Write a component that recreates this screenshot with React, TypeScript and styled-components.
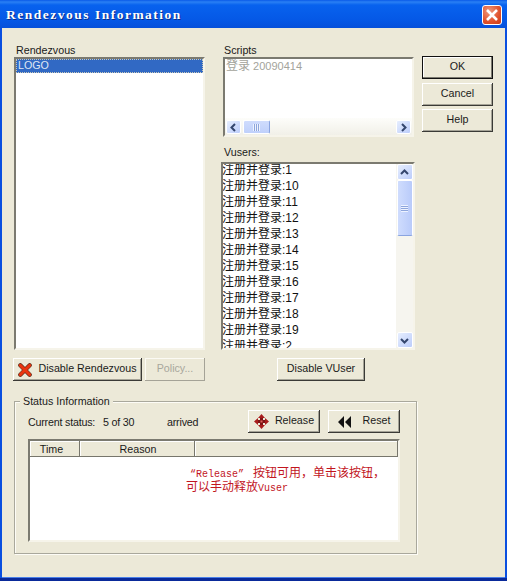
import { ReactNode } from 'react';
import styled, { createGlobalStyle } from 'styled-components';

const GlobalStyle = createGlobalStyle`
  html, body {
    margin: 0;
    padding: 0;
    background: #fff;
  }
  * {
    box-sizing: border-box;
  }
`;

const FACE = '#ece9d8';
const SANS = `"Liberation Sans", "Noto Sans CJK SC", sans-serif`;
const VUSERS = ['1', '10', '11', '12', '13', '14', '15', '16', '17', '18', '19', '2'];

const Window = styled.div`
  width: 507px;
  height: 581px;
  display: flex;
  flex-direction: column;
  overflow: hidden;
  background: #0a4fe0;
  font-family: ${SANS};
  font-size: 10.7px;
  color: #1a1a1a;
`;

const TitleBar = styled.div`
  height: 28px;
  flex: none;
  display: flex;
  align-items: center;
  justify-content: space-between;
  padding: 2px 5px 0 6px;
  background: linear-gradient(#0a5ae8 0, #2a80f4 2px, #0862ee 5px, #0558e6 20px, #0650da 28px);
`;

const TitleText = styled.span`
  font-family: "Liberation Serif", serif;
  font-weight: 700;
  font-size: 13.5px;
  letter-spacing: 1.5px;
  color: #fff;
  text-shadow: 1px 1px #0a2f8c;
`;

const CloseButton = styled.div`
  width: 20px;
  height: 20px;
  display: flex;
  align-items: center;
  justify-content: center;
  border: 1px solid #fff;
  border-radius: 3px;
  background: radial-gradient(circle at 35% 30%, #ee9a7e, #e0512c 60%, #c83a18);
`;

const Body = styled.div`
  flex: 1;
  margin: 0 2px;
  display: flex;
  flex-direction: column;
  padding: 16px 0 0 11px;
  background: ${FACE};
  border-bottom: 1px solid #4a80e8;
`;

const BottomEdge = styled.div`
  height: 3px;
  flex: none;
  background: #0a2a9a;
`;

const TopRow = styled.div`
  display: flex;
  height: 337px;
`;

const LeftColumn = styled.div`
  width: 192px;
  display: flex;
  flex-direction: column;
`;

const MiddleColumn = styled.div`
  width: 193px;
  margin-left: 17px;
  display: flex;
  flex-direction: column;
`;

const RightColumn = styled.div`
  width: 71px;
  margin-left: 7px;
  padding-top: 12px;
  display: flex;
  flex-direction: column;
`;

const FieldLabel = styled.div<{ $indent: number }>`
  height: 13px;
  line-height: 13px;
  padding-left: ${(p) => p.$indent}px;
`;

const Sunken = styled.div<{ $height: number; $inset: number; $width: number }>`
  position: relative;
  width: ${(p) => p.$width}px;
  height: ${(p) => p.$height}px;
  margin-left: ${(p) => p.$inset}px;
  border: 2px solid;
  border-color: #7b7a70 #f6f4ea #f6f4ea #7b7a70;
  background: #fff;
  overflow: hidden;
`;

const SelectedRow = styled.div`
  height: 14px;
  line-height: 13px;
  padding-left: 2px;
  background: #3169c4;
  outline: 1px dotted #c8c8b8;
  outline-offset: -1px;
  color: #dfe6f4;
`;

const ScriptRow = styled.div`
  height: 15px;
  line-height: 15px;
  padding-left: 1px;
  font-size: 11px;
  color: #a3a39b;
`;

const CjkPart = styled.span`
  font-size: 12px;
`;

const HorizontalBar = styled.div`
  height: 17px;
  margin-top: 44px;
  padding: 2px 1px 1px;
  display: flex;
  justify-content: space-between;
  background: linear-gradient(#fdfdfa, #f1f0e8);
`;

const ScrollArrow = styled.div`
  width: 16px;
  height: 16px;
  flex: none;
  display: flex;
  align-items: center;
  justify-content: center;
  border: 1px solid #fff;
  border-radius: 2px;
  background: linear-gradient(135deg, #e6eefe, #bccdfb);
`;

const WideArrow = styled(ScrollArrow)`
  width: 15px;
  height: 14px;
`;

const HorizontalThumb = styled.div`
  width: 27px;
  height: 14px;
  margin: 0 auto 0 2px;
  display: flex;
  align-items: center;
  justify-content: center;
  border: 1px solid #fff;
  border-right-color: #8aa4e0;
  border-radius: 2px;
  background: linear-gradient(#cfdcfd, #bfd0fb);
`;

const GripLines = styled.div<{ $vertical?: boolean }>`
  width: 7px;
  height: 7px;
  background: repeating-linear-gradient(
    ${(p) => (p.$vertical ? '180deg' : '90deg')},
    #eef3ff 0 1px,
    #8ea6dc 1px 2px
  );
`;

const VuserPane = styled.div`
  display: flex;
  height: 100%;
`;

const VuserList = styled.div`
  flex: 1;
  overflow: hidden;
  margin: -2px 0 0 -1px;
`;

const VuserRow = styled.div`
  height: 16px;
  line-height: 16px;
  font-size: 12px;
  white-space: nowrap;
  color: #111;
`;

const VerticalBar = styled.div`
  width: 17px;
  flex: none;
  display: flex;
  flex-direction: column;
  align-items: center;
  background: #f6f5ef;
`;

const VerticalThumb = styled.div`
  width: 16px;
  height: 56px;
  display: flex;
  align-items: center;
  justify-content: center;
  border: 1px solid #fff;
  border-bottom-color: #8aa4e0;
  border-radius: 2px;
  background: linear-gradient(90deg, #cfdcfd, #b9cbfa);
`;

const Spacer = styled.div`
  flex: 1;
`;

const Button = styled.div<{ $width: number; $gap?: number; $disabled?: boolean }>`
  width: ${(p) => p.$width}px;
  height: 23px;
  flex: none;
  display: flex;
  align-items: center;
  justify-content: center;
  gap: ${(p) => p.$gap ?? 0}px;
  background: ${FACE};
  color: ${(p) => (p.$disabled ? '#a8a79c' : '#1a1a1a')};
  box-shadow: ${(p) =>
    p.$disabled
      ? 'inset -1px -1px #a5a397, inset 1px 1px #fbfaf4'
      : 'inset -1px -1px #3a3a36, inset 1px 1px #fff, inset -2px -2px #a5a397'};
`;

const DefaultButton = styled(Button)`
  border: 1px solid #111;
  box-shadow: inset -1px -1px #7b7a70, inset 1px 1px #fff;
`;

const ButtonLabel = styled.span`
  padding-bottom: 3px;
`;

const LeftActions = styled.div`
  display: flex;
  gap: 3px;
  margin-top: 8px;
`;

const MiddleAction = styled.div`
  display: flex;
  margin-top: 8px;
  padding-left: 55px;
`;

const DialogGap = styled.div<{ $size: number }>`
  height: ${(p) => p.$size}px;
  flex: none;
`;

const StatusGroup = styled.div`
  position: relative;
  width: 403px;
  height: 153px;
  margin: 20px 0 0 1px;
  padding: 8px 0 0 13px;
  border: 1px solid #a9a89c;
  box-shadow: 1px 1px #fdfcf6, inset 1px 1px #fdfcf6;
`;

const GroupLegend = styled.span`
  position: absolute;
  top: -7px;
  left: 5px;
  padding: 0 3px;
  line-height: 13px;
  background: ${FACE};
`;

const StatusRow = styled.div`
  width: 372px;
  display: flex;
  align-items: center;
`;

const StatusItem = styled.span<{ $width: number }>`
  width: ${(p) => p.$width}px;
  flex: none;
  letter-spacing: -0.2px;
`;

const ReleaseActions = styled.div`
  margin-left: auto;
  display: flex;
  gap: 8px;
`;

const Table = styled.div`
  position: relative;
  width: 372px;
  height: 103px;
  margin-top: 6px;
  border: 2px solid;
  border-color: #7b7a70 #f6f4ea #f6f4ea #7b7a70;
  background: #fff;
  display: flex;
  flex-direction: column;
`;

const TableHead = styled.div`
  height: 16px;
  display: flex;
  flex: none;
  background: ${FACE};
  border-bottom: 1px solid #77766c;
`;

const HeadCell = styled.div<{ $width?: number; $shift?: number }>`
  width: ${(p) => (p.$width ? `${p.$width}px` : 'auto')};
  flex: ${(p) => (p.$width ? 'none' : 1)};
  padding: 0 ${(p) => (p.$shift && p.$shift < 0 ? -p.$shift : 0)}px 0 ${(p) => (p.$shift && p.$shift > 0 ? p.$shift : 0)}px;
  line-height: 16px;
  text-align: center;
  border-right: 1px solid #77766c;
  box-shadow: inset 1px 1px #fff;
`;

const Annotation = styled.div`
  position: absolute;
  top: 26px;
  left: 156px;
  font-size: 12px;
  line-height: 12px;
  color: #c2161e;
  white-space: nowrap;
`;

const AnnotationLine = styled.div<{ $indent: number }>`
  padding-left: ${(p) => p.$indent}px;
`;

const Latin = styled.span`
  font-family: "Liberation Mono", monospace;
  font-size: 10px;
`;

const QuotedLatin = styled(Latin)`
  padding-right: 3px;
`;

function Chevron({ dir }: { dir: 'left' | 'right' | 'up' | 'down' }) {
  const rotate = { right: 0, down: 90, left: 180, up: 270 }[dir];
  return (
    <svg width="9" height="9" viewBox="0 0 9 9" style={{ transform: `rotate(${rotate}deg)` }}>
      <path d="M3 1 L6.5 4.5 L3 8" fill="none" stroke="#34466e" strokeWidth="2" />
    </svg>
  );
}

function CloseGlyph() {
  return (
    <svg width="14" height="14" viewBox="0 0 14 14">
      <path d="M2 2 L12 12 M12 2 L2 12" stroke="#fff" strokeWidth="2.6" />
    </svg>
  );
}

function DisableIcon() {
  return (
    <svg width="14" height="14" viewBox="0 0 15 15">
      <path d="M2.5 2.5 L12.5 12.5 M12.5 2.5 L2.5 12.5" stroke="#5a2a18" strokeWidth="4.6" strokeLinecap="round" />
      <path d="M2.5 2.5 L12.5 12.5 M12.5 2.5 L2.5 12.5" stroke="#ea3510" strokeWidth="3.2" strokeLinecap="round" />
    </svg>
  );
}

function ReleaseIcon() {
  return (
    <svg width="15" height="15" viewBox="0 0 15 15">
      <path d="M7.5 0 L11 4 H4 Z M7.5 15 L11 11 H4 Z M0 7.5 L4 4 V11 Z M15 7.5 L11 4 V11 Z" fill="#a81c1c" />
      <path d="M6 4 H9 V6 H11 V9 H9 V11 H6 V9 H4 V6 H6 Z" fill="#7c1414" />
      <path d="M6.5 6.5 H8.5 V8.5 H6.5 Z" fill="#e0605a" />
    </svg>
  );
}

function ResetIcon() {
  return (
    <svg width="13" height="12" viewBox="0 0 13 12">
      <path d="M6 0 L6 12 L0 6 Z M13 0 L13 12 L7 6 Z" fill="#111" />
    </svg>
  );
}

function IconButton({ icon, label, gap, width }: { icon: ReactNode; label: string; gap: number; width: number }) {
  return (
    <Button $width={width} $gap={gap}>
      {icon}
      <ButtonLabel>{label}</ButtonLabel>
    </Button>
  );
}

export default function App() {
  return (
    <>
      <GlobalStyle />
      <Window>
        <TitleBar>
          <TitleText>Rendezvous Information</TitleText>
          <CloseButton>
            <CloseGlyph />
          </CloseButton>
        </TitleBar>
        <Body>
          <TopRow>
            <LeftColumn>
              <FieldLabel $indent={3}>Rendezvous</FieldLabel>
              <Sunken $width={191} $height={293} $inset={1}>
                <SelectedRow>LOGO</SelectedRow>
              </Sunken>
              <LeftActions>
                <IconButton icon={<DisableIcon />} label="Disable Rendezvous" gap={6} width={129} />
                <Button $width={60} $disabled><ButtonLabel>Policy...</ButtonLabel></Button>
              </LeftActions>
            </LeftColumn>
            <MiddleColumn>
              <FieldLabel $indent={2}>Scripts</FieldLabel>
              <Sunken $width={191} $height={80} $inset={1}>
                <ScriptRow>
                  <CjkPart>登录</CjkPart> 20090414
                </ScriptRow>
                <HorizontalBar>
                  <WideArrow><Chevron dir="left" /></WideArrow>
                  <HorizontalThumb><GripLines /></HorizontalThumb>
                  <WideArrow><Chevron dir="right" /></WideArrow>
                </HorizontalBar>
              </Sunken>
              <DialogGap $size={9} />
              <FieldLabel $indent={2}>Vusers:</FieldLabel>
              <DialogGap $size={3} />
              <Sunken $width={194} $height={188} $inset={-1}>
                <VuserPane>
                  <VuserList>
                    {VUSERS.map((id) => (
                      <VuserRow key={id}>注册并登录:{id}</VuserRow>
                    ))}
                  </VuserList>
                  <VerticalBar>
                    <ScrollArrow><Chevron dir="up" /></ScrollArrow>
                    <VerticalThumb><GripLines $vertical /></VerticalThumb>
                    <Spacer />
                    <ScrollArrow><Chevron dir="down" /></ScrollArrow>
                  </VerticalBar>
                </VuserPane>
              </Sunken>
              <MiddleAction>
                <Button $width={88}><ButtonLabel>Disable VUser</ButtonLabel></Button>
              </MiddleAction>
            </MiddleColumn>
            <RightColumn>
              <DefaultButton $width={71}><ButtonLabel>OK</ButtonLabel></DefaultButton>
              <DialogGap $size={4} />
              <Button $width={71}><ButtonLabel>Cancel</ButtonLabel></Button>
              <DialogGap $size={3} />
              <Button $width={71}><ButtonLabel>Help</ButtonLabel></Button>
            </RightColumn>
          </TopRow>
          <StatusGroup>
            <GroupLegend>Status Information</GroupLegend>
            <StatusRow>
              <StatusItem $width={75}>Current status:</StatusItem>
              <StatusItem $width={64}>5 of 30</StatusItem>
              <StatusItem $width={40}>arrived</StatusItem>
              <ReleaseActions>
                <IconButton icon={<ReleaseIcon />} label="Release" gap={6} width={72} />
                <IconButton icon={<ResetIcon />} label="Reset" gap={12} width={72} />
              </ReleaseActions>
            </StatusRow>
            <Table>
              <TableHead>
                <HeadCell $width={50} $shift={-6}>Time</HeadCell>
                <HeadCell $width={115} $shift={2}>Reason</HeadCell>
                <HeadCell />
              </TableHead>
              <Annotation>
                <AnnotationLine $indent={4}>
                  <QuotedLatin>“Release” </QuotedLatin>按钮可用，单击该按钮，
                </AnnotationLine>
                <AnnotationLine $indent={0}>
                  可以手动释放<Latin>Vuser</Latin>
                </AnnotationLine>
              </Annotation>
            </Table>
          </StatusGroup>
        </Body>
        <BottomEdge />
      </Window>
    </>
  );
}
